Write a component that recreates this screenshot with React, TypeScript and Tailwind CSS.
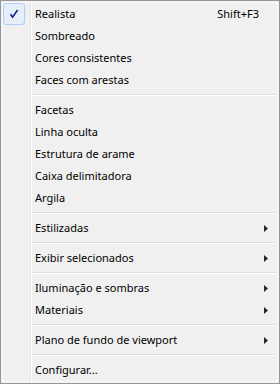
type Entry =
  | { sep: true }
  | { sep?: false; label: string; shortcut?: string; sub?: boolean; checked?: boolean };

const entries: Entry[] = [
  { label: "Realista", shortcut: "Shift+F3", checked: true },
  { label: "Sombreado" },
  { label: "Cores consistentes" },
  { label: "Faces com arestas" },
  { sep: true },
  { label: "Facetas" },
  { label: "Linha oculta" },
  { label: "Estrutura de arame" },
  { label: "Caixa delimitadora" },
  { label: "Argila" },
  { sep: true },
  { label: "Estilizadas", sub: true },
  { sep: true },
  { label: "Exibir selecionados", sub: true },
  { sep: true },
  { label: "Iluminação e sombras", sub: true },
  { label: "Materiais", sub: true },
  { sep: true },
  { label: "Plano de fundo de viewport", sub: true },
  { sep: true },
  { label: "Configurar..." },
];

const Check = () => (
  <div className="flex h-[22px] w-[22px] items-center justify-center rounded-[3px] border border-[#aecdf2] bg-[#e5eefa]">
    <svg width="10" height="10" viewBox="0 0 10 10">
      <path d="M1.5 5.2 L3.6 8.2 L8.6 1" fill="none" stroke="#14208c" strokeWidth="1.6" />
    </svg>
  </div>
);

const Arrow = () => (
  <svg width="4" height="7" viewBox="0 0 4 7" className="shrink-0">
    <polygon points="0,0 4,3.5 0,7" fill="#262626" />
  </svg>
);

export default function App() {
  return (
    <div
      className="h-[384px] w-[280px] border border-[#979797] bg-[#f0f0f0] p-px text-[11px] text-black"
      style={{ fontFamily: '"Segoe UI", "Noto Sans", sans-serif' }}
    >
      <div className="flex h-full flex-col border border-[#f9f9f9]">
        {entries.map((e, i) =>
          e.sep ? (
            <div key={i} className="flex h-[8px]">
              <div className="w-[28px] shrink-0 border-r border-[#e2e3e3]" />
              <div className="flex flex-1 items-center border-l border-white">
                <div className="h-[2px] w-full border-t border-b border-t-[#e0e0e0] border-b-white" />
              </div>
            </div>
          ) : (
            <div key={i} className="flex h-[22px]">
              <div className="w-[28px] shrink-0 border-r border-[#e2e3e3]">{e.checked && <Check />}</div>
              <div className="flex flex-1 items-center border-l border-white pl-[3px] pr-[9px]">
                <span className="flex-1 whitespace-nowrap">{e.label}</span>
                {e.shortcut && <span className="mr-[9px]">{e.shortcut}</span>}
                {e.sub && <Arrow />}
              </div>
            </div>
          )
        )}
      </div>
    </div>
  );
}
